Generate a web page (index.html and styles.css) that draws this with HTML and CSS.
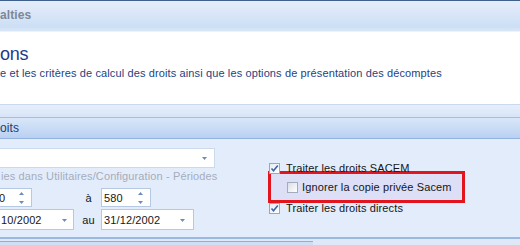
FILE: index.html
```html
<!DOCTYPE html>
<html lang="fr">
<head>
  <meta charset="UTF-8">
  <title>Options</title>
  <link rel="stylesheet" href="styles.css">
</head>
<body>

<div class="window">
  <div class="topline"></div>
  <div class="apptitle">alties</div>

  <!-- Intro -->
  <div class="intro">
    <div class="intro-title">ons</div>
    <div class="intro-desc">e et les critères de calcul des droits ainsi que les options de présentation des décomptes</div>
  </div>
  <div class="spacer"></div>

  <!-- Calcul des droits -->
  <div class="group">
    <div class="group-head">oits</div>
    <div class="group-body">
      <div class="col-left">
        <div class="combo">
          <svg class="drop" width="5" height="3" viewBox="0 0 5 3"><path d="M0 0h5L2.5 3z"/></svg>
        </div>
        <div class="hint">ies dans Utilitaires/Configuration - Périodes</div>
        <div class="range">
          <div class="field spin spin-a">
            <span class="value">0</span>
            <svg class="spin-btn" width="5" height="12" viewBox="0 0 5 12"><path d="M0 3h5L2.5 0z"/><path d="M0 9h5L2.5 12z"/></svg>
          </div>
          <span class="range-label">à</span>
          <div class="field spin spin-b">
            <span class="value">580</span>
            <svg class="spin-btn" width="5" height="12" viewBox="0 0 5 12"><path d="M0 3h5L2.5 0z"/><path d="M0 9h5L2.5 12z"/></svg>
          </div>
          <div class="field date date-a">
            <span class="value">10/2002</span>
            <svg class="drop" width="5" height="3" viewBox="0 0 5 3"><path d="M0 0h5L2.5 3z"/></svg>
          </div>
          <span class="range-label">au</span>
          <div class="field date date-b">
            <span class="value">31/12/2002</span>
            <svg class="drop" width="5" height="3" viewBox="0 0 5 3"><path d="M0 0h5L2.5 3z"/></svg>
          </div>
        </div>
      </div>

      <div class="col-right">
        <div class="opt">
          <span class="check checked"><svg width="9" height="9" viewBox="0 0 9 9"><path d="M1.5 4.5l2 2.2L7.8 1.5" /></svg></span>
          Traiter les droits SACEM
        </div>
        <div class="opt opt-sub">
          <span class="check"></span>
          Ignorer la copie privée Sacem
        </div>
        <div class="opt opt-last">
          <span class="check checked"><svg width="9" height="9" viewBox="0 0 9 9"><path d="M1.5 4.5l2 2.2L7.8 1.5" /></svg></span>
          Traiter les droits directs
        </div>
      </div>
    </div>
  </div>

  <div class="footer">
    <div class="footer-tab"></div>
  </div>
</div>

</body>
</html>
```

FILE: styles.css
```css
body {
  margin: 0;
  font-family: 'Liberation Sans', Arial, sans-serif;
  font-size: 11px;
  letter-spacing: 0.12px;
  color: #161616;
  background-color: #dfe8f7;
}
.window {
  width: 520px;
  height: 245px;
  overflow: hidden;
}
.topline {
  height: 1px;
  background-color: #3f5f8c;
}
.apptitle {
  height: 23px;
  padding-top: 7px;
  line-height: 14px;
  font-size: 12px;
  font-weight: bold;
  color: #7c8797;
  background: linear-gradient(#e3ecf9 0%, #dde8f8 30%, #cddff5 85%, #d9e6f8 100%);
}
.intro {
  height: 73px;
  background: white;
  border-top: 1px solid #eef3fb;
  box-sizing: border-box;
  padding-top: 11px;
}
.intro-title {
  font-size: 18px;
  line-height: 22px;
  letter-spacing: -0.3px;
  color: #1d3a88;
}
.intro-desc {
  margin-top: 2px;
  line-height: 13px;
  color: #253f82;
}
.spacer {
  height: 12px;
  border-top: 1px solid #c9d9ef;
  border-bottom: 1px solid #a2bee6;
  background: linear-gradient(#e6eefa, #d8e5f8);
}
.group-head {
  height: 19px;
  padding-top: 1px;
  line-height: 18px;
  font-size: 12px;
  color: #1f3a70;
  background: linear-gradient(#d9e7f9 0%, #c9dcf5 50%, #b9d0f1 100%);
  border-bottom: 1px solid #94b2de;
}
.group-body {
  height: 98px;
  display: flex;
  background-color: #e3ecfb;
}
.col-left {
  width: 272px;
  margin-left: -3px;
  padding-top: 9px;
}
.combo {
  position: relative;
  width: 216px;
  height: 18px;
  background: white;
  border: 1px solid #cbd9ec;
}
.drop, .spin-btn {
  fill: #6b8cc0;
}
.combo .drop {
  position: absolute;
  right: 7px;
  top: 8px;
}
.hint {
  margin-top: 2px;
  padding-left: 4px;
  line-height: 13px;
  color: #a5adbb;
}
.range {
  display: grid;
  grid-template-columns: 79px 25px auto;
  grid-row-gap: 2px;
  align-items: center;
  margin-top: 5px;
}
.range-label {
  text-align: center;
}
.field {
  position: relative;
  display: flex;
  align-items: center;
  background: white;
  border: 1px solid #b7c9e2;
  box-sizing: border-box;
}
.field .value {
  padding-left: 2px;
}
.spin {
  height: 19px;
}
.date {
  height: 21px;
}
.spin-a {
  width: 35px;
}
.spin-a .value {
  padding-left: 1px;
}
.spin-b {
  width: 50px;
}
.date-a {
  width: 77px;
}
.date-a .value {
  padding-left: 3px;
}
.date-b {
  width: 93px;
}
.spin-btn {
  position: absolute;
  right: 7px;
  top: 3px;
}
.date-a .drop {
  position: absolute;
  right: 6px;
  top: 9px;
}
.date-b .drop {
  position: absolute;
  right: 8px;
  top: 9px;
}
.col-right {
  padding-top: 19px;
}
.opt {
  display: flex;
  align-items: center;
  height: 21px;
  line-height: 13px;
}
.check {
  display: inline-block;
  width: 9px;
  height: 9px;
  margin-right: 6px;
  border: 1px solid #a3acbc;
  background: linear-gradient(135deg, #dadee7, #ffffff);
}
.check.checked {
  border-color: #9aa8bf;
  background: linear-gradient(135deg, #e7ebf2, #ffffff);
}
.check svg {
  display: block;
  fill: none;
  stroke: #3d63ad;
  stroke-width: 1.6;
}
.opt-sub {
  height: 26px;
  width: 175px;
  margin: -8px 0 0 -1px;
  padding-left: 16px;
  border: 3px solid #e2141e;
  background-color: #dcdff6;
  box-sizing: content-box;
}
.opt-sub .check {
  margin-right: 4px;
}
.opt-last {
  margin-top: -5px;
}
.footer {
  height: 6px;
  border-top: 2px solid #9bb8e0;
  padding-top: 2px;
  background-color: #dfe8f7;
}
.footer-tab {
  width: 313px;
  height: 4px;
  border-top: 1px solid #8fb0df;
  background-color: #cddef5;
}
```
